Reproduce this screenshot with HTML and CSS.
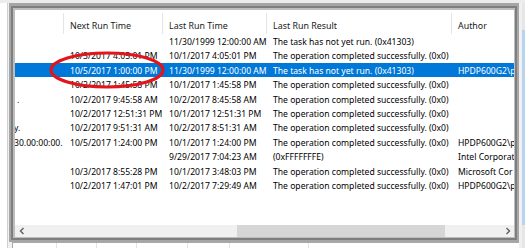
FILE: index.html
```html
<!DOCTYPE html>
<html>
<head>
<meta charset="utf-8">
<link rel="stylesheet" href="styles.css">
</head>
<body>
<div class="top"></div>
<div class="main">
  <div class="left"></div>
  <div class="col">
    <div class="frame">
      <div class="frame-in">
        <div class="frame-in2">
          <div class="view">
            <div class="hdr">
              <div class="hc"></div>
              <div class="hc">Next Run Time</div>
              <div class="hc">Last Run Time</div>
              <div class="hc">Last Run Result</div>
              <div class="hc last">Author</div>
            </div>
            <div class="row"><div class="c"></div><div class="c"></div><div class="c">11/30/1999 12:00:00 AM</div><div class="c">The task has not yet run. (0x41303)</div><div class="c"></div></div>
            <div class="row"><div class="c"></div><div class="c">10/3/2017 4:05:01 PM</div><div class="c">10/1/2017 4:05:01 PM</div><div class="c">The operation completed successfully. (0x0)</div><div class="c"></div></div>
            <div class="row sel"><div class="c"></div><div class="c">10/5/2017 1:00:00 PM</div><div class="c">11/30/1999 12:00:00 AM</div><div class="c">The task has not yet run. (0x41303)</div><div class="c">HPDP600G2\p</div></div>
            <div class="row"><div class="c"></div><div class="c">10/2/2017 1:45:58 PM</div><div class="c">10/1/2017 1:45:58 PM</div><div class="c">The operation completed successfully. (0x0)</div><div class="c"></div></div>
            <div class="row"><div class="c cut">.</div><div class="c">10/2/2017 9:45:58 AM</div><div class="c">10/2/2017 8:45:58 AM</div><div class="c">The operation completed successfully. (0x0)</div><div class="c"></div></div>
            <div class="row"><div class="c"></div><div class="c">10/2/2017 12:51:31 PM</div><div class="c">10/1/2017 12:51:31 PM</div><div class="c">The operation completed successfully. (0x0)</div><div class="c"></div></div>
            <div class="row"><div class="c cut2">y.</div><div class="c">10/2/2017 9:51:31 AM</div><div class="c">10/2/2017 8:51:31 AM</div><div class="c">The operation completed successfully. (0x0)</div><div class="c"></div></div>
            <div class="row"><div class="c cut2">30.00:00:00.</div><div class="c">10/5/2017 1:24:00 PM</div><div class="c">10/1/2017 1:24:00 PM</div><div class="c">The operation completed successfully. (0x0)</div><div class="c">HPDP600G2\p</div></div>
            <div class="row"><div class="c"></div><div class="c"></div><div class="c">9/29/2017 7:04:23 AM</div><div class="c">(0xFFFFFFFE)</div><div class="c">Intel Corporat</div></div>
            <div class="row"><div class="c"></div><div class="c">10/3/2017 8:55:28 PM</div><div class="c">10/1/2017 3:48:03 PM</div><div class="c">The operation completed successfully. (0x0)</div><div class="c">Microsoft Cor</div></div>
            <div class="row"><div class="c"></div><div class="c">10/2/2017 1:47:01 PM</div><div class="c">10/2/2017 7:29:49 AM</div><div class="c">The operation completed successfully. (0x0)</div><div class="c">HPDP600G2\p</div></div>
            <div class="fill"></div>
            <div class="hscroll">
              <div class="arrow"><svg width="6" height="8" viewBox="0 0 6 8"><path d="M4.5 1 L1.5 4 L4.5 7" fill="none" stroke="#606060" stroke-width="1.4"/></svg></div>
              <div class="track"><div class="pre"></div><div class="thumb"></div></div>
              <div class="arrow"><svg width="6" height="8" viewBox="0 0 6 8"><path d="M1.5 1 L4.5 4 L1.5 7" fill="none" stroke="#606060" stroke-width="1.4"/></svg></div>
            </div>
          </div>
        </div>
      </div>
    </div>
    <div class="lower">
      <div class="lc w1"></div><div class="lc w2"></div><div class="lc w3"></div><div class="lc w4"></div><div class="lc w5"></div><div class="lc w6"></div>
    </div>
  </div>
  <div class="rgap"></div>
  <div class="rstrip"></div>
</div>
<svg class="mark" width="120" height="42" viewBox="0 0 120 42"><ellipse cx="58" cy="19" rx="56" ry="17" fill="none" stroke="#e3141c" stroke-width="3.2"/></svg>
</body>
</html>
```
FILE: styles.css
```css
html, body {
  margin: 0;
  padding: 0;
  width: 525px;
  height: 248px;
  overflow: hidden;
}
body {
  background: #f0f0f0;
  font-family: "Noto Sans", "Open Sans", sans-serif;
  font-size: 8.6px;
  color: #000;
  position: relative;
}
.top {
  height: 3px;
  background: #ececec;
}
.main {
  display: flex;
  height: 245px;
}
.left {
  width: 7px;
  background: #fff;
  border-right: 1px solid #cfcfcf;
}
.col {
  width: 510px;
  margin-left: 1px;
  display: flex;
  flex-direction: column;
}
.frame {
  height: 239px;
  box-sizing: border-box;
  border-style: solid;
  border-color: #a6a6a6;
  border-width: 3px 2px 2px 2px;
  display: flex;
}
.frame-in {
  flex: 1;
  display: flex;
  border: 2px solid #7e7e7e;
}
.frame-in2 {
  flex: 1;
  display: flex;
  border-style: solid;
  border-color: #bdbdbd;
  border-width: 2px 1px 1px 2px;
}
.view {
  flex: 1;
  min-width: 0;
  background: #fff;
  overflow: hidden;
  display: flex;
  flex-direction: column;
}
.hdr, .row {
  display: grid;
  grid-template-columns: 49px 99px 104px 185px minmax(0, 1fr);
  flex: none;
}
.hdr {
  height: 24px;
}
.hc {
  margin-top: 3px;
  height: 21px;
  padding-top: 2px;
  line-height: 21px;
  padding-left: 6px;
  border-right: 1px solid #e5e5e5;
  box-sizing: border-box;
  white-space: nowrap;
  overflow: hidden;
  color: #1a1a1a;
  font-size: 8.9px;
}
.hc.last {
  border-right: none;
}
.row {
  height: 14.4px;
  line-height: 14.4px;
}
.c {
  padding-left: 6px;
  padding-top: 1px;
  white-space: nowrap;
  overflow: hidden;
}
.c.cut {
  padding-left: 2px;
}
.c.cut2 {
  padding-left: 0;
  text-indent: -1px;
}
.sel {
  background: #0078d7;
  color: #fff;
}
.fill {
  flex: 1;
}
.hscroll {
  height: 12px;
  flex: none;
  display: flex;
  background: #f0f0f0;
}
.arrow {
  width: 13px;
  display: flex;
  align-items: center;
  justify-content: center;
}
.track {
  flex: 1;
  display: flex;
}
.pre {
  width: 209px;
}
.thumb {
  width: 208px;
  background: #d6d6d6;
}
.lower {
  flex: 1;
  margin-left: 3px;
  background: #fff;
  border-top: 1px solid #a9a9a9;
  border-left: 1px solid #a9a9a9;
  display: flex;
}
.lc {
  border-right: 1px solid #e3e3e3;
}
.w1 { width: 43px; }
.w2 { width: 39px; }
.w3 { width: 39px; }
.w4 { width: 50px; }
.w5 { width: 41px; }
.w6 { width: 78px; }
.rgap {
  width: 3px;
}
.rstrip {
  width: 3px;
  background: linear-gradient(#e6e6e6 0, #e6e6e6 27px, #b7d3ee 27px, #b7d3ee 222px, #e6e6e6 222px);
}
.mark {
  position: absolute;
  left: 49px;
  top: 51px;
}
```
